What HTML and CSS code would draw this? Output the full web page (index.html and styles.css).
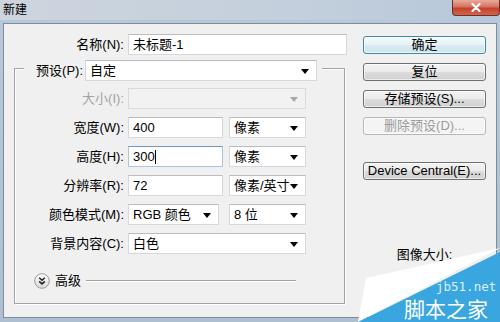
FILE: index.html
```html
<!DOCTYPE html>
<html lang="zh-CN">
<head>
  <meta charset="UTF-8" />
  <title>新建</title>
  <link rel="stylesheet" href="styles.css">
</head>
<body>
  <div class="window">
    <div class="titlebar">
      <span class="title">新建</span>
      <button class="close-btn" aria-label="关闭">
        <svg width="10" height="9" viewBox="0 0 10 9"><path d="M1.5 1 L8.5 8 M8.5 1 L1.5 8" stroke="#fff" stroke-width="2.2" stroke-linecap="round"/></svg>
      </button>
    </div>
    <div class="frame">
      <div class="client">
        <div class="main">
          <div class="row name-row">
            <span class="label">名称(N):</span>
            <div class="field input name-input">未标题-1</div>
          </div>
          <fieldset class="preset-box">
            <legend class="preset-legend">
              <span class="label legend-label">预设(P):</span>
              <div class="field select preset-select">自定</div>
            </legend>
            <div class="row">
              <span class="label disabled">大小(I):</span>
              <div class="field select full is-disabled"></div>
            </div>
            <div class="row">
              <span class="label">宽度(W):</span>
              <div class="field input short">400</div>
              <div class="field select unit">像素</div>
            </div>
            <div class="row">
              <span class="label">高度(H):</span>
              <div class="field input short focused">300<span class="caret"></span></div>
              <div class="field select unit">像素</div>
            </div>
            <div class="row">
              <span class="label">分辨率(R):</span>
              <div class="field input short">72</div>
              <div class="field select unit">像素/英寸</div>
            </div>
            <div class="row">
              <span class="label">颜色模式(M):</span>
              <div class="field select mode">RGB 颜色</div>
              <div class="field select unit">8 位</div>
            </div>
            <div class="row">
              <span class="label">背景内容(C):</span>
              <div class="field select full">白色</div>
            </div>
            <div class="adv-row">
              <svg class="adv-icon" width="16" height="16" viewBox="0 0 16 16">
                <defs>
                  <linearGradient id="advg" x1="0" y1="0" x2="0" y2="1">
                    <stop offset="0" stop-color="#ffffff"/>
                    <stop offset="1" stop-color="#d9d9d9"/>
                  </linearGradient>
                </defs>
                <circle cx="8" cy="8" r="7.3" fill="url(#advg)" stroke="#9a9a9a"/>
                <path d="M5.2 4.8 L8 7.3 L10.8 4.8 M5.2 8.4 L8 10.9 L10.8 8.4" fill="none" stroke="#222" stroke-width="1.5"/>
              </svg>
              <span class="adv-text">高级</span>
              <span class="adv-line"></span>
            </div>
          </fieldset>
        </div>
        <div class="side">
          <button class="btn default">确定</button>
          <button class="btn">复位</button>
          <button class="btn">存储预设(S)...</button>
          <button class="btn" disabled>删除预设(D)...</button>
          <button class="btn device">Device Central(E)...</button>
          <div class="image-size">图像大小:</div>
        </div>
      </div>
    </div>
    <!-- site watermark in the corner -->
    <div class="watermark">
      <svg width="145" height="77" viewBox="0 0 145 77">
        <polygon points="11,33 145,3 3,77" fill="#ffffff"/>
        <polygon points="3,77 145,7 145,77" fill="#3aa6df"/>
      </svg>
      <span class="wm-url">jb51.net</span>
      <span class="wm-name">脚本之家</span>
    </div>
  </div>
</body>
</html>
```

FILE: styles.css
```css
body {
  margin: 0;
  font-family: "Liberation Sans", "Noto Sans CJK SC", sans-serif;
  font-size: 13px;
  line-height: 17px;
  color: #000;
}
.window {
  position: relative;
  width: 500px;
  height: 322px;
  overflow: hidden;
  background: #b3c4d7;
}
/* Title bar */
.titlebar {
  height: 20px;
  display: flex;
  align-items: flex-start;
  background: linear-gradient(90deg, #cdd5de 0%, #c3cfdc 60%, #b6c7da 100%);
}
.title {
  padding: 3px 0 0 3px;
  font-size: 12px;
  line-height: 14px;
}
.close-btn {
  margin-left: auto;
  width: 48px;
  height: 16px;
  padding: 0;
  border: 1px solid #6b2f27;
  border-top: 0;
  border-radius: 0 0 4px 4px;
  background: linear-gradient(#e8ab9d 0%, #d6735f 45%, #c2412b 55%, #d4644c 100%);
  display: flex;
  align-items: center;
  justify-content: center;
}
.frame {
  padding: 3px 3px 4px 3px;
  background: linear-gradient(#b8c8da, #aebfd2);
}
.client {
  display: flex;
  height: 295px;
  box-sizing: border-box;
  background: #f0f0f0;
  border: 1px solid #7f8c99;
}
/* Left form */
.main {
  width: 343px;
  padding-top: 10px;
}
.row {
  display: flex;
  align-items: center;
  gap: 4px;
  height: 21px;
}
.label {
  width: 109px;
  flex: none;
  text-align: right;
  white-space: nowrap;
}
.name-row .label {
  width: 120px;
}
.label.disabled {
  color: #a3a3a3;
}
.field {
  position: relative;
  height: 21px;
  box-sizing: border-box;
  padding-left: 4px;
  display: flex;
  align-items: center;
  background: #fff;
  border: 1px solid #d5d9de;
  border-top-color: #b9bdc3;
  white-space: nowrap;
}
.name-input { width: 219px; }
.short { width: 95px; }
.unit { width: 77px; margin-left: 2px; }
.mode { width: 91px; }
.mode + .unit { margin-left: 6px; }
.full { width: 178px; }
.focused {
  border-color: #a9c5e2;
  border-top-color: #6f97c2;
}
.caret {
  width: 1px;
  height: 14px;
  background: #000;
}
.select::after {
  content: "";
  position: absolute;
  right: 7px;
  top: 8px;
  border-left: 4px solid transparent;
  border-right: 4px solid transparent;
  border-top: 5px solid #000;
}
.is-disabled {
  background: #f2f2f2;
  border-color: #dadada;
}
.is-disabled::after {
  border-top-color: #a8a8a8;
}
/* Group box */
.preset-box {
  margin: 0 0 0 10px;
  padding: 7px 0 14px 0;
  width: 331px;
  min-width: 0;
  box-sizing: border-box;
  border: 1px solid #a3a3a3;
  box-shadow: inset 1px 1px 0 #fff, 1px 1px 0 #fff;
}
.preset-legend {
  margin-left: 9px;
  padding: 5px 5px 0 11px;
  display: flex;
  align-items: center;
  gap: 2px;
  background: #f0f0f0;
}
.legend-label {
  width: 48px;
}
.preset-select {
  width: 232px;
}
.preset-box .row + .row {
  margin-top: 8px;
}
.adv-row {
  margin-top: 18px;
  height: 17px;
  display: flex;
  align-items: center;
  padding-left: 19px;
}
.adv-icon {
  flex: none;
}
.adv-text {
  margin-left: 5px;
}
.adv-line {
  flex: 1;
  height: 1px;
  margin: 0 48px 0 5px;
  background: #a3a3a3;
  box-shadow: 0 1px 0 #fff;
}
/* Right buttons */
.side {
  width: 123px;
  margin-left: 16px;
  padding-top: 12px;
  display: flex;
  flex-direction: column;
  gap: 9px;
}
.btn {
  height: 18px;
  padding: 0;
  font: inherit;
  line-height: 16px;
  color: #000;
  border: 1px solid #707070;
  border-radius: 3px;
  background: linear-gradient(#f3f3f3 0%, #ebebeb 50%, #dddddd 50%, #d0d0d0 100%);
  box-shadow: inset 0 0 0 1px rgba(255,255,255,0.6);
}
.btn.default {
  border-color: #3f8aa6;
  background: linear-gradient(#f4fafc 0%, #e6f2f6 50%, #d8ebf1 50%, #cfe4ec 100%);
}
.btn:disabled {
  color: #9c9c9c;
  border-color: #b4b8bb;
  background: #f4f4f4;
}
.btn.device {
  margin-top: 18px;
}
.image-size {
  margin-top: 57px;
  text-align: center;
}
/* Watermark */
.watermark {
  position: absolute;
  right: 0;
  bottom: 0;
  width: 145px;
  height: 77px;
}
.watermark svg {
  display: block;
}
.wm-url {
  position: absolute;
  left: 81px;
  top: 37px;
  font-family: "DejaVu Sans Mono", monospace;
  font-size: 12.5px;
  line-height: 10px;
  color: #dcefff;
}
.wm-name {
  position: absolute;
  left: 49px;
  top: 53px;
  font-family: "Noto Sans CJK SC", sans-serif;
  font-size: 21px;
  line-height: 20px;
  color: #fff;
  white-space: nowrap;
}
```
